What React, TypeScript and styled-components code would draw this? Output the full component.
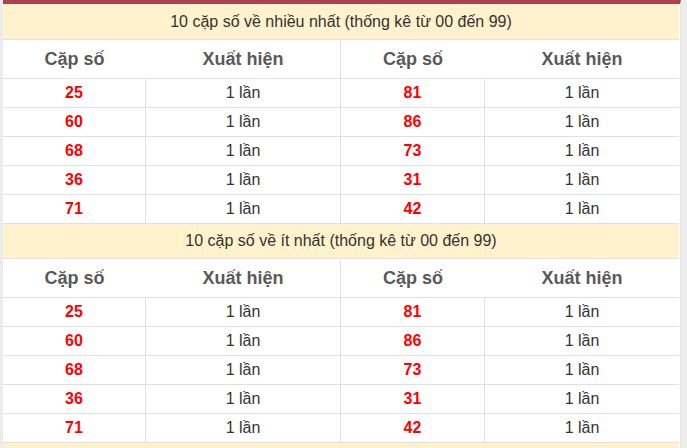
import React from "react";
import styled, { createGlobalStyle } from "styled-components";

const Global = createGlobalStyle`
  html, body { margin: 0; padding: 0; background: #ececec; }
  body { font-family: "Liberation Sans", Arial, sans-serif; }
`;

const Page = styled.div`
  display: flex;
  width: 687px;
  height: 448px;
  overflow: hidden;
  background: #ececec;
`;

const Frame = styled.div`
  margin-left: 3px;
  width: 676px;
  background: #fff;
  border-top: 4px solid #a9434f;
  border-right: 1px solid #e6e6e6;
  padding-right: 1px;
  align-self: flex-start;
`;

const Title = styled.div<{ $h: number }>`
  height: ${(p) => p.$h}px;
  background: #fff2cc;
  border-bottom: 1px solid #e2e2e2;
  display: flex;
  align-items: center;
  justify-content: center;
  font-size: 16px;
  color: #333;
`;

const Grid = styled.div`
  display: grid;
  grid-template-columns: 143px 195px 144px 194px;
`;

const Head = styled.div<{ $split?: boolean }>`
  height: 38px;
  display: flex;
  align-items: center;
  justify-content: center;
  font-size: 18px;
  font-weight: bold;
  color: #595959;
  border-bottom: 1px solid #e0e0e0;
  border-right: ${(p) => (p.$split ? "1px solid #e0e0e0" : "none")};
`;

const Cell = styled.div<{ $last?: boolean }>`
  height: 28px;
  display: flex;
  align-items: center;
  justify-content: center;
  font-size: 16px;
  color: #333;
  border-bottom: 1px solid #e0e0e0;
  border-right: ${(p) => (p.$last ? "none" : "1px solid #e0e0e0")};
`;

const Num = styled(Cell)`
  color: #ff0000;
  font-weight: bold;
`;

const Strip = styled.div`
  height: 20px;
  background: #fff2cc;
`;

const left = ["25", "60", "68", "36", "71"];
const right = ["81", "86", "73", "31", "42"];

function Section({ title, titleHeight }: { title: string; titleHeight: number }) {
  return (
    <>
      <Title $h={titleHeight}>{title}</Title>
      <Grid>
        <Head>Cặp số</Head>
        <Head $split>Xuất hiện</Head>
        <Head>Cặp số</Head>
        <Head>Xuất hiện</Head>
        {left.map((l, i) => (
          <React.Fragment key={l}>
            <Num>{l}</Num>
            <Cell>1 lần</Cell>
            <Num>{right[i]}</Num>
            <Cell $last>1 lần</Cell>
          </React.Fragment>
        ))}
      </Grid>
    </>
  );
}

export default function App() {
  return (
    <Page>
      <Global />
      <Frame>
        <Section title="10 cặp số về nhiều nhất (thống kê từ 00 đến 99)" titleHeight={35} />
        <Section title="10 cặp số về ít nhất (thống kê từ 00 đến 99)" titleHeight={34} />
        <Strip />
      </Frame>
    </Page>
  );
}
